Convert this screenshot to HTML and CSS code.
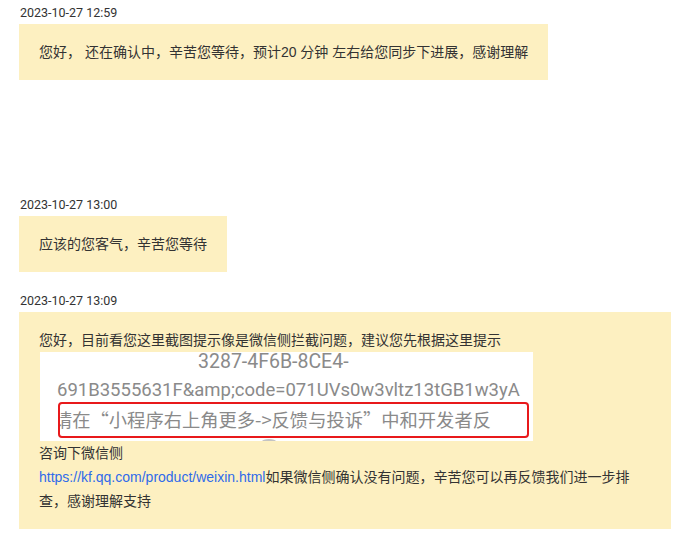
FILE: index.html
```html
<!DOCTYPE html>
<html lang="zh-CN">
  <head>
    <meta charset="utf-8" />
    <meta name="viewport" content="width=device-width, initial-scale=1" />
    <title>工单沟通记录</title>
    <link rel="stylesheet" href="styles.css">
  </head>
  <body>
    <div id="chat">

      <div class="msg msg-first">
        <div class="msg-time">2023-10-27 12:59</div>
        <div class="bubble">您好， 还在确认中，辛苦您等待，预计20 分钟 左右给您同步下进展，感谢理解</div>
      </div>

      <div class="msg msg-second">
        <div class="msg-time">2023-10-27 13:00</div>
        <div class="bubble">应该的您客气，辛苦您等待</div>
      </div>

      <div class="msg">
        <div class="msg-time">2023-10-27 13:09</div>
        <div class="bubble">
          <div>您好，目前看您这里截图提示像是微信侧拦截问题，建议您先根据这里提示</div>
          <div class="shot">
            <div class="shot-line shot-line1">3287-4F6B-8CE4-</div>
            <div class="shot-line shot-line2">691B3555631F&amp;amp;code=071UVs0w3vltz13tGB1w3yA</div>
            <div class="shot-box">
              <span class="shot-tip">请在“小程序右上角更多-&gt;反馈与投诉”中和开发者反</span>
            </div>
            <div class="shot-blob"></div>
          </div>
          <div>咨询下微信侧</div>
          <div><a class="link" href="#">https://kf.qq.com/product/weixin.html</a>如果微信侧确认没有问题，辛苦您可以再反馈我们进一步排查，感谢理解支持</div>
        </div>
      </div>

    </div>
  </body>
</html>
```

FILE: styles.css
```css
:root {
  --bubble: #fdf0c1;
  --text: #333333;
  --link: #2f6bea;
  --shot-text: #8a8a8a;
  --mark: #e8191b;
}

body {
  margin: 0;
  background: #ffffff;
  color: var(--text);
  font-family: "Liberation Sans", "Noto Sans CJK SC", sans-serif;
}

#chat {
  padding: 3px 6px 0 19px;
}

.msg {
  margin-bottom: 19px;
}

.msg-first {
  margin-bottom: 115px;
}

.msg-time {
  font-family: Roboto, "Liberation Sans", sans-serif;
  font-size: 12.5px;
  line-height: 20px;
  padding-left: 1px;
  margin-bottom: 1px;
}

.bubble {
  box-sizing: border-box;
  width: fit-content;
  max-width: 652px;
  padding: 16px 20px;
  background-color: var(--bubble);
  font-size: 14px;
  line-height: 24px;
}

.link {
  color: var(--link);
  text-decoration: none;
}

/* pasted screenshot inside the last reply */
.shot {
  position: relative;
  width: 493px;
  height: 89px;
  margin-left: 1px;
  overflow: hidden;
  background: #ffffff;
  color: var(--shot-text);
  font-family: Roboto, "Noto Sans CJK SC", sans-serif;
  font-size: 18.5px;
  line-height: 28px;
  white-space: nowrap;
}

.shot-line1 {
  margin-top: -4px;
  padding-left: 158px;
  font-size: 19.5px;
}

.shot-line2 {
  padding-left: 17px;
}

.shot-box {
  box-sizing: border-box;
  width: 471px;
  height: 36px;
  margin: -2px 0 0 18px;
  border: 2.5px solid var(--mark);
  border-radius: 4px;
  overflow: hidden;
  line-height: 31px;
}

.shot-tip {
  display: inline-block;
  margin-left: -6px;
  font-family: "Noto Sans CJK SC", sans-serif;
  font-size: 18.3px;
}

.shot-blob {
  position: absolute;
  left: 222px;
  bottom: -3px;
  width: 14px;
  height: 5px;
  border-radius: 50%;
  background: #c4c4c4;
}
```
